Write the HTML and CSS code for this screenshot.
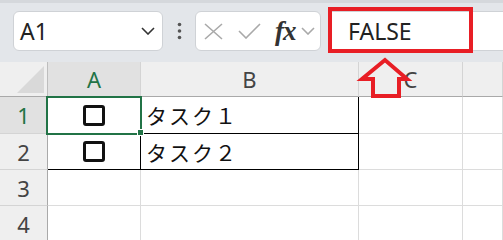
FILE: index.html
```html
<!DOCTYPE html>
<html lang="ja">
<head>
<meta charset="utf-8">
<link rel="stylesheet" href="styles.css">
</head>
<body>
<div class="app">
  <div class="topband"></div>
  <div class="toolbar">
    <div class="namebox">
      <span class="nb-text">A1</span>
      <svg class="nb-chev" width="14" height="8" viewBox="0 0 14 8"><path d="M1 1 L7 7 L13 1" fill="none" stroke="#333" stroke-width="1.6"/></svg>
    </div>
    <div class="dots">
      <svg width="5" height="18" viewBox="0 0 5 18"><circle cx="2.5" cy="2.5" r="1.8" fill="#555"/><circle cx="2.5" cy="9" r="1.8" fill="#555"/><circle cx="2.5" cy="15.5" r="1.8" fill="#555"/></svg>
    </div>
    <div class="fbtns">
      <svg class="ic-x" width="20" height="17" viewBox="0 0 20 17"><path d="M1 1 L18 16 M18 1 L1 16" fill="none" stroke="#a9a9a9" stroke-width="1.6"/></svg>
      <svg class="ic-check" width="23" height="16" viewBox="0 0 23 16"><path d="M1 8 L8 15 L22 1" fill="none" stroke="#a9a9a9" stroke-width="1.6"/></svg>
      <span class="fx">fx</span>
      <svg class="ic-chev" width="14" height="8" viewBox="0 0 14 8"><path d="M1 1 L7 7 L13 1" fill="none" stroke="#a9a9a9" stroke-width="1.6"/></svg>
    </div>
    <div class="finput"><span class="ftext">FALSE</span></div>
  </div>
  <div class="grid">
    <div class="cell corner"><div class="tri"></div></div>
    <div class="cell colhead sel-head">A</div>
    <div class="cell colhead">B</div>
    <div class="cell colhead">C</div>
    <div class="cell colhead"></div>

    <div class="cell rowhead sel-head">1</div>
    <div class="cell ca bk-r"><span class="cbox"></span></div>
    <div class="cell txt bk-r bk-b">タスク１</div>
    <div class="cell"></div>
    <div class="cell"></div>

    <div class="cell rowhead">2</div>
    <div class="cell ca bk-r bk-b"><span class="cbox"></span></div>
    <div class="cell txt bk-r bk-b">タスク２</div>
    <div class="cell"></div>
    <div class="cell"></div>

    <div class="cell rowhead">3</div>
    <div class="cell"></div>
    <div class="cell"></div>
    <div class="cell"></div>
    <div class="cell"></div>

    <div class="cell rowhead">4</div>
    <div class="cell"></div>
    <div class="cell"></div>
    <div class="cell"></div>
    <div class="cell"></div>
  </div>
  <div class="selection"></div>
  <div class="handle"></div>
  <div class="annot-box"></div>
  <svg class="annot-arrow" width="503" height="240" viewBox="0 0 503 240">
    <polygon points="385,60 362,79 373,79 373,96 399,96 399,79 407,79" fill="none" stroke="#e81e25" stroke-width="4" stroke-linejoin="miter"/>
  </svg>
</div>
</body>
</html>
```

FILE: styles.css
```css
* { box-sizing: border-box; }
html, body { margin: 0; padding: 0; }
body {
  width: 503px;
  height: 240px;
  overflow: hidden;
  background: #fff;
  font-family: "Noto Sans", "Noto Sans CJK JP", sans-serif;
}
.app {
  position: relative;
  width: 503px;
  height: 240px;
  overflow: hidden;
}
.topband {
  height: 3px;
  background: #d5d8dc;
}
.toolbar {
  height: 59px;
  background: #e3e6ea;
  display: flex;
  align-items: flex-start;
  padding-top: 8px;
  padding-left: 13px;
}
.namebox {
  width: 150px;
  height: 40px;
  background: #fff;
  border: 1px solid #cfd2d6;
  border-radius: 6px;
  display: flex;
  align-items: center;
  justify-content: space-between;
  padding: 0 7px 0 6px;
}
.nb-text {
  font-size: 23px;
  color: #222;
  line-height: 1;
}
.dots {
  width: 32px;
  height: 40px;
  display: flex;
  align-items: center;
  justify-content: center;
}
.fbtns {
  width: 126px;
  height: 40px;
  background: #fff;
  border: 1px solid #cfd2d6;
  border-radius: 6px;
  display: flex;
  align-items: center;
  padding-left: 8px;
}
.ic-x { margin-right: 14px; }
.ic-check { margin-right: 14px; }
.fx {
  font-family: "Liberation Serif", serif;
  font-style: italic;
  font-weight: bold;
  font-size: 27px;
  color: #333;
  line-height: 1;
  margin-right: 5px;
  letter-spacing: -1px;
}
.finput {
  flex: 1;
  margin-left: 7px;
  height: 40px;
  background: #fff;
  border-top: 1px solid #cfd2d6;
  border-bottom: 1px solid #cfd2d6;
  display: flex;
  align-items: center;
  padding-left: 20px;
}
.ftext {
  font-size: 23px;
  color: #222;
  line-height: 1;
}
.grid {
  display: grid;
  grid-template-columns: 48px 93px 218px 104px 40px;
  grid-template-rows: 35px 37px 36px 36px 36px;
}
.cell {
  border-right: 1px solid #dcdcdc;
  border-bottom: 1px solid #dcdcdc;
  display: flex;
  align-items: center;
}
.corner {
  background: #efefef;
  border-right: 1px solid #bdbdbd;
  border-bottom: 1px solid #a9a9a9;
  position: relative;
}
.tri {
  position: absolute;
  right: 3px;
  bottom: 3px;
  width: 27px;
  height: 27px;
  background: #d9d9d9;
  clip-path: polygon(100% 0, 100% 100%, 0 100%);
}
.colhead {
  background: #efefef;
  border-right: 1px solid #d4d4d4;
  border-bottom: 1px solid #a9a9a9;
  justify-content: center;
  font-size: 22px;
  color: #444;
}
.rowhead {
  background: #efefef;
  border-right: 1px solid #a9a9a9;
  border-bottom: 1px solid #d4d4d4;
  justify-content: center;
  font-size: 22px;
  color: #444;
}
.sel-head {
  background: #e1e1e1;
  color: #217346;
}
.ca { justify-content: center; }
.cbox {
  width: 22px;
  height: 21px;
  border: 3px solid #111;
  border-radius: 3px;
}
.txt {
  font-family: "Noto Sans CJK JP", sans-serif;
  font-size: 21px;
  color: #111;
  padding-left: 5px;
  letter-spacing: 2px;
}
.bk-r { border-right-color: #000; }
.bk-b { border-bottom-color: #000; }
.selection {
  position: absolute;
  left: 46px;
  top: 96px;
  width: 96px;
  height: 39px;
  border: 2px solid #217346;
}
.handle {
  position: absolute;
  left: 137px;
  top: 129px;
  width: 7px;
  height: 7px;
  background: #217346;
  border: 1px solid #fff;
}
.annot-box {
  position: absolute;
  left: 328px;
  top: 7px;
  width: 145px;
  height: 46px;
  border: 4px solid #e81e25;
}
.annot-arrow {
  position: absolute;
  left: 0;
  top: 0;
  pointer-events: none;
}
```
